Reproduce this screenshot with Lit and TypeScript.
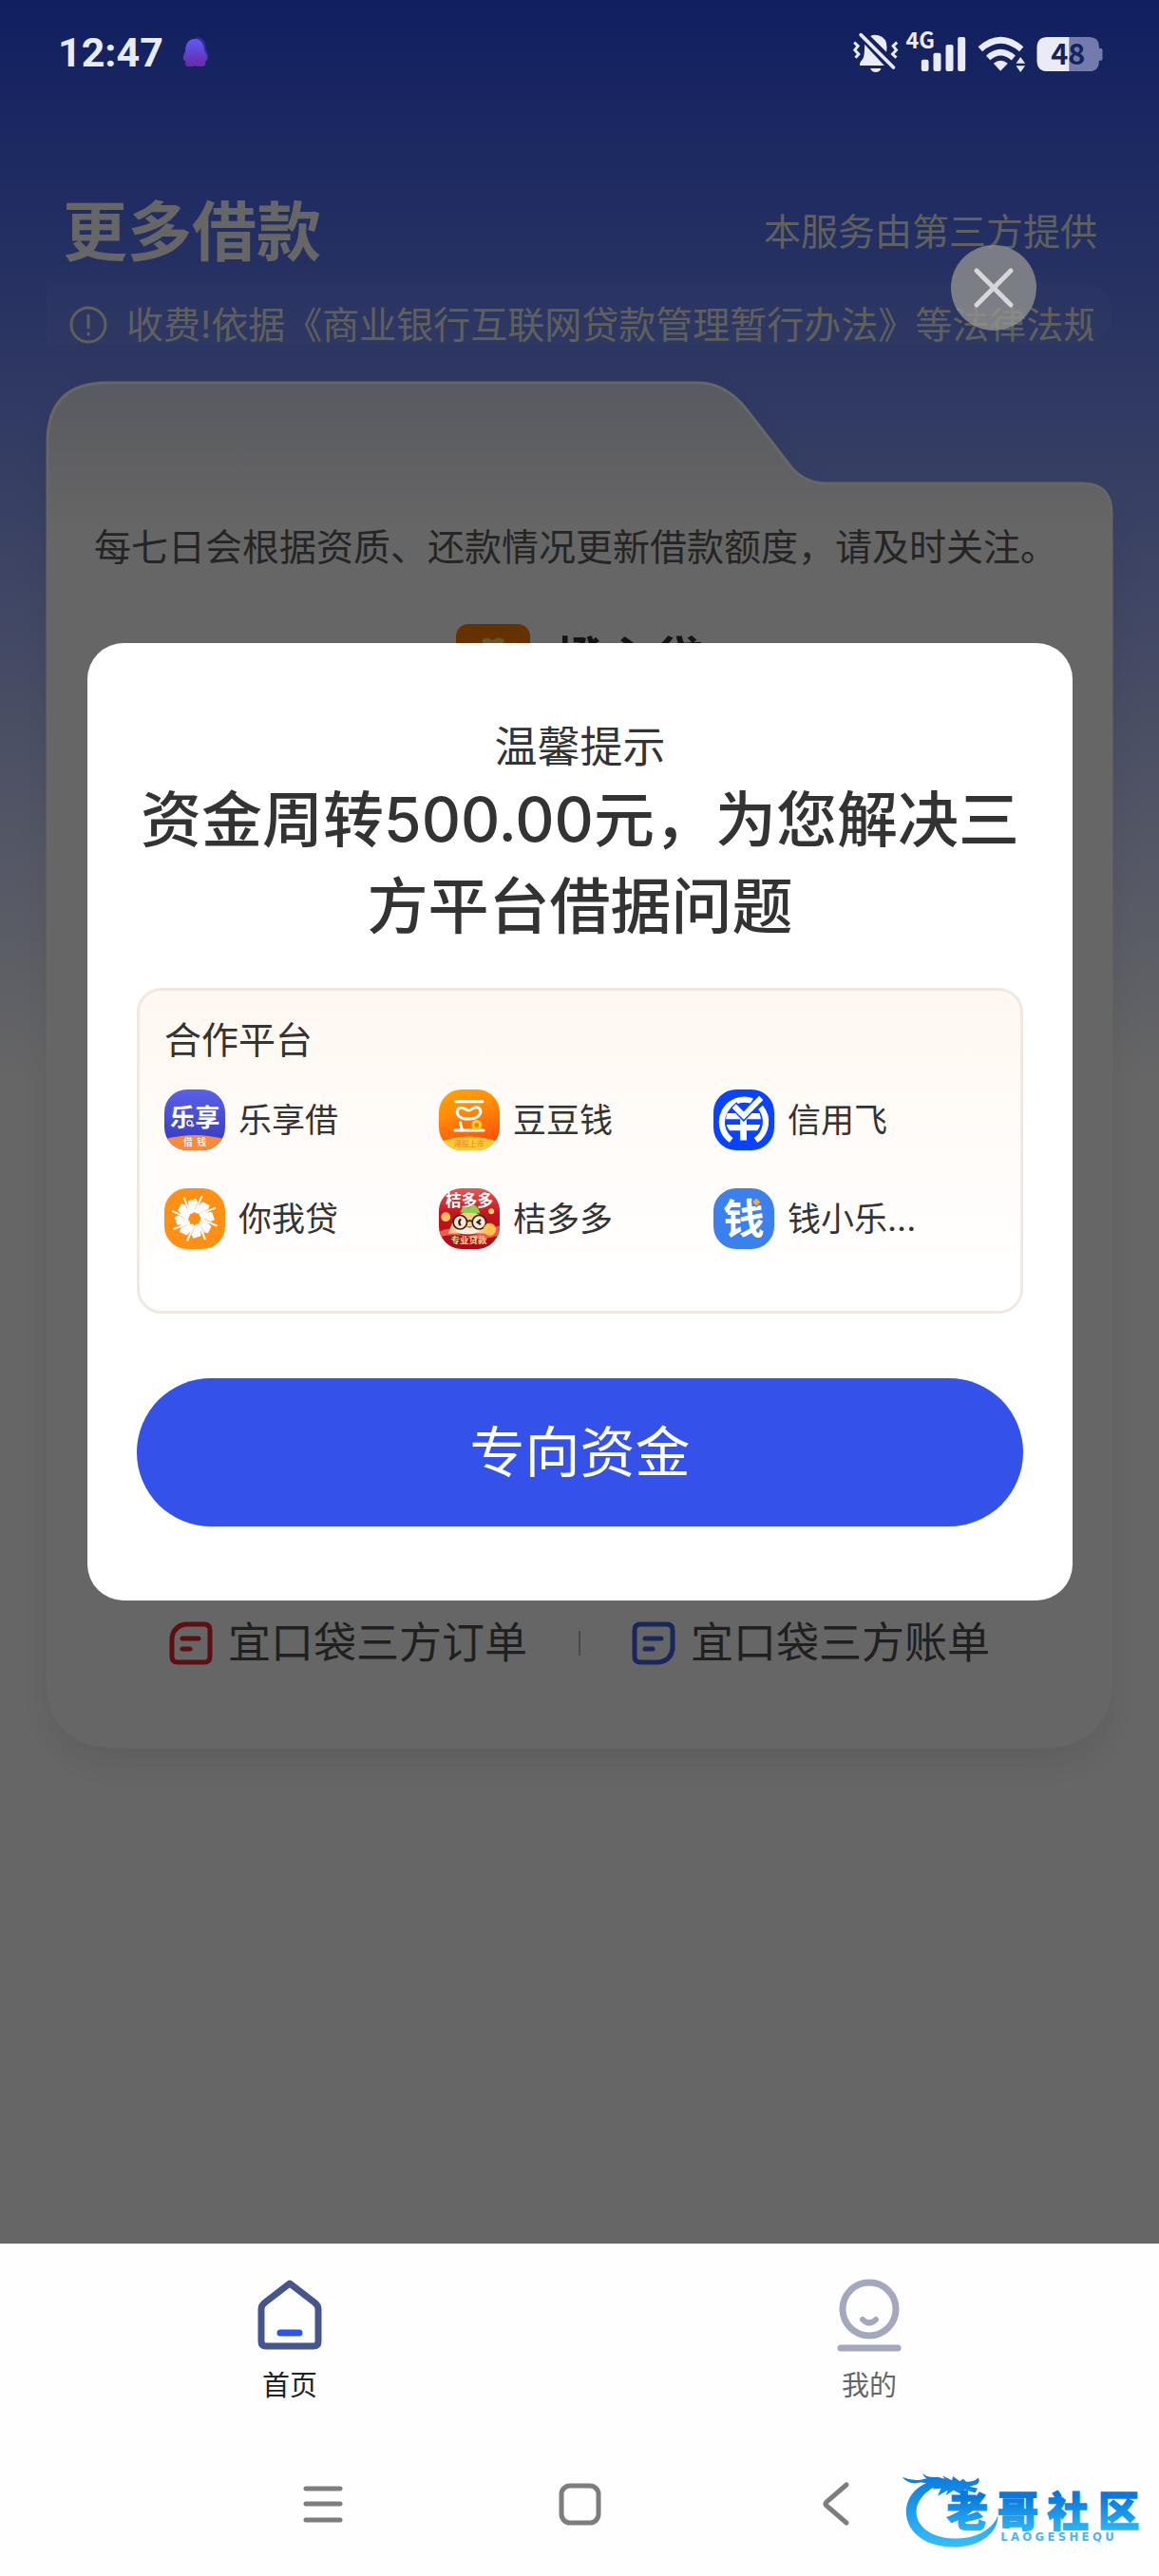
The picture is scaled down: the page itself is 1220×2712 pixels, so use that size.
import { LitElement, html, css, svg } from "lit";
import { customElement } from "lit/decorators.js";

const cjk = css`"Inter", "Noto Sans CJK SC", sans-serif`;

const orderIcon = html`<svg class="link-icon" viewBox="0 0 46 46" fill="none" stroke-linecap="round" aria-hidden="true">
  <path d="M17 3H37Q43 3 43 9V37Q43 43 37 43H9Q3 43 3 37V17Q5 5 17 3Z" stroke="#e8252b" stroke-width="5" />
  <path d="M14 18H31M14 29H22" stroke="#e8252b" stroke-width="5" />
</svg>`;

const billIcon = html`<svg class="link-icon" viewBox="0 0 46 46" fill="none" stroke-linecap="round" aria-hidden="true">
  <path d="M9 3H37Q43 3 43 9V29Q41 41 29 43H9Q3 43 3 37V9Q3 3 9 3Z" stroke="#4262e6" stroke-width="5" />
  <path d="M14 18H31M14 29H22" stroke="#4262e6" stroke-width="5" />
</svg>`;

const logoLexiang = svg`
  <defs><linearGradient id="g" x2="0" y2="1"><stop stop-color="#5b60ea"/><stop offset="1" stop-color="#3238b8"/></linearGradient></defs>
  <rect width="195" height="195" fill="url(#g)"/>
  <text x="18" y="119" font-size="80" font-weight="700" fill="#fff">乐享</text>
  <circle cx="81" cy="108" r="11" fill="#3f46cc"/>
  <circle cx="81" cy="108" r="8" fill="none" stroke="#fff" stroke-width="4"/>
  <path d="M0 160Q97 132 195 160V195H0Z" fill="#fb8a3c"/>
  <text x="61" y="180" font-size="30" font-weight="500" fill="#fff">借</text>
  <text x="104" y="180" font-size="30" font-weight="500" fill="#fff">钱</text>`;

const logoDoudou = svg`
  <defs><linearGradient id="g" x2=".3" y2="1"><stop stop-color="#ffa500"/><stop offset=".45" stop-color="#ff8a08"/><stop offset="1" stop-color="#ff5208"/></linearGradient></defs>
  <rect width="195" height="195" fill="url(#g)"/>
  <g fill="none" stroke="#fff" stroke-width="9" stroke-linecap="round" stroke-linejoin="round">
    <path d="M54 39H140"/>
    <path d="M74 59C58 58 54 74 64 85C76 98 116 98 128 84C140 70 132 56 118 57C106 58 104 67 96 67C88 67 86 60 74 59Z"/>
    <path d="M68 106L74 128M52 131H144"/>
  </g>
  <circle cx="121" cy="114" r="12" fill="#ff7a10" stroke="#ffd21e" stroke-width="9"/>
  <path d="M0 170Q97 132 195 170V195H0Z" fill="#ffc93a"/>
  <text x="49" y="184" font-size="24" font-weight="700" fill="#ec9a2a">港股上市</text>`;

const logoXinyong = svg`
  <defs><clipPath id="c"><circle cx="96" cy="98" r="56"/></clipPath></defs>
  <rect width="195" height="195" fill="#0a43ff"/>
  <g fill="none" stroke="#fff" stroke-width="19">
    <path d="M57 163A72 72 0 0 1 124 37"/>
    <path d="M151 57A72 72 0 0 1 136 163"/>
    <g clip-path="url(#c)"><path d="M30 86H162M30 122H162"/></g>
    <path d="M96 88V163" stroke-width="21"/>
  </g>
  <path d="M64 50L97 84L152 28" fill="none" stroke="#0a43ff" stroke-width="27"/>
  <path d="M66 53L97 84L153 27" fill="none" stroke="#fff" stroke-width="18"/>`;

const logoNiwo = svg`
  <rect width="195" height="195" fill="#ff9016"/>
  <g transform="translate(97 97)" fill="#fff" stroke="#fff">
    ${[0, 45, 90, 135, 180, 225, 270, 315].map(
      (a) => svg`<g transform="rotate(${a})">
        <path d="M-20 -12L-20 -56L4 -64L10 -52L-4 -18Z" stroke="none"/>
        <path d="M3 -26L24 -72" stroke-width="6" fill="none"/>
      </g>`,
    )}
  </g>
  <path d="M97 80l5 9 10-3-3 10 9 5-9 5 3 10-10-3-5 9-5-9-10 3 3-10-9-5 9-5-3-10 10 3Z" fill="#ff9016"/>`;

const logoJuduo = svg`
  <defs><linearGradient id="g" x2="0" y2="1"><stop stop-color="#e5575c"/><stop offset=".4" stop-color="#c4161f"/><stop offset="1" stop-color="#a80d17"/></linearGradient></defs>
  <rect width="195" height="195" fill="url(#g)"/>
  <path d="M0 140Q40 120 60 142T140 140T195 120V150Q150 168 97 156T0 156Z" fill="#ee5a50"/>
  <text x="21" y="59" font-size="51" font-weight="700" fill="#fff">桔多多</text>
  <path d="M30 145Q50 78 97 74Q148 78 166 145Z" fill="#ffc98c"/>
  <path d="M68 78L78 58Q98 70 108 52Q128 58 132 80Z" fill="#8fce4a"/>
  <ellipse cx="92" cy="134" rx="38" ry="14" fill="#fff0da"/>
  <g fill="#ffe8cf" stroke="#33231f" stroke-width="5"><circle cx="68" cy="109" r="22"/><circle cx="129" cy="109" r="22"/><path d="M90 107Q98 101 107 107" fill="none"/></g>
  <path d="M70 98Q60 110 70 119M134 101L124 109L134 116" fill="none" stroke="#33231f" stroke-width="7"/>
  <path d="M86 122Q98 132 110 122" fill="#e9532c"/>
  <circle cx="22" cy="92" r="15" fill="#ffbe62"/><circle cx="163" cy="132" r="20" fill="#ffc24a"/><circle cx="168" cy="74" r="9" fill="#ffd36e"/>
  <text x="38" y="178" font-size="29" font-weight="700" fill="#ffd9a0">专业贷款</text>`;

const logoQian = svg`
  <rect width="195" height="195" fill="#3c80ee"/>
  <text x="31" y="147" font-size="132" font-weight="700" fill="#fff">钱</text>
  <path d="M138 26L155 44L138 62L121 44Z" fill="#3c80ee"/>
  <path d="M138 32L150 44L138 56L126 44Z" fill="#f0b032"/>`;

const platforms = [
  { name: "乐享借", logo: logoLexiang },
  { name: "豆豆钱", logo: logoDoudou },
  { name: "信用飞", logo: logoXinyong },
  { name: "你我贷", logo: logoNiwo },
  { name: "桔多多", logo: logoJuduo },
  { name: "钱小乐...", logo: logoQian },
];

@customElement("platform-item")
class PlatformItem extends LitElement {
  static properties = { item: { attribute: false } };
  declare item: (typeof platforms)[number];

  static styles = css`
    :host {
      display: flex;
      align-items: center;
      gap: 14px;
      font: 400 35px/40px ${cjk};
      color: #333;
      white-space: nowrap;
    }
    .logo {
      flex: none;
      width: 64px;
      height: 64px;
      border-radius: 24px;
      font-family: "Noto Sans CJK SC", sans-serif;
    }
  `;

  render() {
    return html`<svg class="logo" viewBox="0 0 195 195" aria-hidden="true">${this.item.logo}</svg>
      <span>${this.item.name}</span>`;
  }
}

@customElement("status-bar")
class StatusBar extends LitElement {
  static styles = css`
    :host {
      display: flex;
      align-items: center;
      gap: 20px;
      padding: 0 57px 0 61px;
      color: #e9ebf6;
    }
    .time {
      font: 700 43px/48px "Roboto", sans-serif;
    }
    .app {
      width: 28px;
      height: 32px;
    }
    .signals {
      width: 267px;
      height: 47px;
      margin-left: auto;
      font-family: "Noto Sans CJK SC", sans-serif;
      font-weight: 700;
    }
  `;

  render() {
    return html`
      <span class="time">12:47</span>
      <svg class="app" viewBox="0 0 28 32" aria-hidden="true">
        <defs>
          <linearGradient id="p" x2="0" y2="1"><stop stop-color="#5d5cf4" /><stop offset="1" stop-color="#6a28a8" /></linearGradient>
        </defs>
        <path d="M14 0C23 0 25 7 25 13C28 18 28 22 26 25H8Z" fill="#2a2f96" />
        <path d="M13 2C20 2 23 8 23 14C27 20 27 24 24 25C25 28 24 31 21 31H15L13 30L11 31H5C3 30 2 28 4 25C0 26 0 21 3 15C3 8 6 2 13 2Z" fill="url(#p)" />
      </svg>
      <svg class="signals" viewBox="80 60 800 141" overflow="visible" fill="#e9ebf6" role="img" aria-label="静音 4G 48%">
        <path d="M140 78Q150 72 166 76Q192 84 192 112L191 128Z" />
        <path d="M122 104L184 171H107Q104 164 116 150Q122 142 122 104Z" />
        <path d="M140 180H174Q170 192 157 192Q144 192 140 180Z" />
        <path d="M110 74L213 177" fill="none" stroke="#e9ebf6" stroke-width="11" stroke-linecap="round" />
        <path d="M89 98L101 109L91 122L103 135L93 146M224 98L212 109L222 122L210 135L222 146" fill="none" stroke="#e9ebf6" stroke-width="9" />
        <text x="252" y="117" font-size="70">4G</text>
        <rect x="301" y="152" width="23" height="37" rx="6" />
        <rect x="339" y="131" width="24" height="58" rx="6" />
        <rect x="378" y="105" width="24" height="84" rx="6" />
        <rect x="416" y="81" width="24" height="108" rx="6" />
        <path d="M487 119Q551 62 617 119" fill="none" stroke="#e9ebf6" stroke-width="20" />
        <path d="M512 147Q551 112 592 147" fill="none" stroke="#e9ebf6" stroke-width="19" />
        <path d="M529 164Q551 147 574 164L551 188Z" />
        <path d="M614 144L629 164H600ZM614 192L629 172H600Z" />
        <path d="M768 81H830Q862 81 862 112V158Q862 189 830 189H768Z" fill="#727bab" />
        <rect x="858" y="116" width="15" height="40" rx="7" fill="#727bab" />
        <path d="M768 81H700Q666 81 666 115V155Q666 189 700 189H768Z" />
        <text x="710" y="168" font-size="92" fill="#142260">48</text>
      </svg>
    `;
  }
}

@customElement("tip-dialog")
class TipDialog extends LitElement {
  static styles = css`
    :host {
      display: block;
      position: relative;
      padding: 80px 52px 78px;
      border-radius: 38px;
      background: #fff;
      color: #333;
      font-family: ${cjk};
    }
    .eyebrow {
      margin: 0;
      font-size: 45px;
      font-weight: 400;
      line-height: 60px;
      text-align: center;
    }
    .headline {
      margin: 0;
      font-size: 64px;
      font-weight: 500;
      line-height: 91px;
      text-align: center;
    }
    .panel {
      margin-top: 41px;
      padding: 32px 34px 65px 26px;
      border: 3px solid #f1e8e1;
      border-radius: 26px;
      background: linear-gradient(#fff8f1, #ffffff 90%);
    }
    .panel-title {
      margin: 0;
      font-size: 39px;
      font-weight: 400;
      line-height: 40px;
    }
    .grid {
      display: grid;
      grid-template-columns: repeat(3, 1fr);
      row-gap: 40px;
      margin: 32px 0 0;
      padding: 0;
      list-style: none;
    }
    .action {
      display: block;
      width: 100%;
      height: 156px;
      margin-top: 68px;
      border: 0;
      border-radius: 78px;
      background: #3452ea;
      color: #fff;
      font: 400 58px/80px ${cjk};
    }
    .close {
      position: absolute;
      top: -419px;
      right: 38px;
      width: 90px;
      height: 90px;
      padding: 0;
      border: 0;
      border-radius: 50%;
      background: rgba(150, 150, 145, 0.76);
    }
    .close svg {
      display: block;
    }
  `;

  render() {
    return html`
      <button class="close" type="button" aria-label="关闭">
        <svg width="90" height="90" viewBox="0 0 90 90" fill="none" stroke="#d6d7da" stroke-width="5" stroke-linecap="round">
          <path d="M27 27L63 63M63 27L27 63" />
        </svg>
      </button>
      <p class="eyebrow">温馨提示</p>
      <h2 class="headline">资金周转500.00元，为您解决三方平台借据问题</h2>
      <section class="panel">
        <h3 class="panel-title">合作平台</h3>
        <ul class="grid">
          ${platforms.map((p) => html`<li><platform-item .item=${p}></platform-item></li>`)}
        </ul>
      </section>
      <button class="action" type="button">专向资金</button>
    `;
  }
}

@customElement("bottom-nav")
class BottomNav extends LitElement {
  static styles = css`
    :host {
      display: block;
      position: relative;
      padding-top: 34px;
      background: #fefefe;
      font-family: ${cjk};
    }
    .tabs {
      display: grid;
      grid-template-columns: 1fr 1fr;
    }
    .tab {
      display: flex;
      flex-direction: column;
      align-items: center;
      gap: 16px;
      color: #666;
      font-size: 29px;
      line-height: 40px;
      text-decoration: none;
    }
    .tab.active {
      color: #222;
    }
    .system {
      display: flex;
      justify-content: center;
      gap: 210px;
      padding: 74px 0 46px;
    }
    .key {
      padding: 0;
      border: 0;
      background: none;
      width: 60px;
      height: 60px;
    }
    .watermark {
      position: absolute;
      right: 16px;
      bottom: 28px;
      width: 257px;
      height: 87px;
    }
  `;

  render() {
    return html`
      <nav class="tabs">
        <a class="tab active" href="#home">
          <svg width="80" height="80" viewBox="0 0 80 80" fill="none" stroke-linejoin="round" stroke-linecap="round" aria-hidden="true">
            <path d="M40 8L66 28Q70 31 70 35V69Q70 74 65 74H15Q10 74 10 69V35Q10 31 14 28Z" stroke="#46568c" stroke-width="7" />
            <path d="M30 60H50" stroke="#2b55ea" stroke-width="7" />
          </svg>
          <span>首页</span>
        </a>
        <a class="tab" href="#mine">
          <svg width="80" height="80" viewBox="0 0 80 80" fill="none" stroke="#a3a8bf" stroke-linecap="round" aria-hidden="true">
            <circle cx="40" cy="35" r="28" stroke-width="7" />
            <path d="M33 46Q40 53 47 46" stroke-width="6" />
            <path d="M10 76H70" stroke-width="7" />
          </svg>
          <span>我的</span>
        </a>
      </nav>
      <div class="system">
        <button class="key" type="button" aria-label="最近任务">
          <svg width="60" height="60" viewBox="0 0 60 60" fill="none" stroke="#7d7d7d" stroke-width="5" stroke-linecap="round">
            <path d="M12 14H48M12 30H48M12 47H48" />
          </svg>
        </button>
        <button class="key" type="button" aria-label="主屏幕">
          <svg width="60" height="60" viewBox="0 0 60 60" fill="none" stroke="#7d7d7d" stroke-width="5">
            <rect x="11" y="11" width="39" height="39" rx="9" />
          </svg>
        </button>
        <button class="key" type="button" aria-label="返回">
          <svg width="60" height="60" viewBox="0 0 60 60" fill="none" stroke="#7d7d7d" stroke-width="5" stroke-linecap="round">
            <path d="M41 10L20 28Q18 30 20 32L41 50" />
          </svg>
        </button>
      </div>
      <svg class="watermark" viewBox="80 50 770 260" font-family="'Noto Sans CJK SC', sans-serif">
        <defs>
          <linearGradient id="w" gradientUnits="userSpaceOnUse" x1="0" y1="80" x2="0" y2="300">
            <stop stop-color="#0b7be0" />
            <stop offset="1" stop-color="#37bdf7" />
          </linearGradient>
          <linearGradient id="t" gradientUnits="userSpaceOnUse" x1="0" y1="145" x2="0" y2="245">
            <stop stop-color="#0878dc" />
            <stop offset="1" stop-color="#2ab2f4" />
          </linearGradient>
        </defs>
        <g fill="url(#w)">
          <path d="M180 95C60 130 70 300 250 303C340 303 390 255 390 205C370 250 320 278 250 276C120 270 90 160 200 108Z" />
          <path d="M88 82Q120 96 150 90Q170 84 185 92L205 100L190 110Q160 94 130 102Q104 102 88 82Z" />
          <path d="M152 70Q165 85 200 82L222 88L215 78L245 92L248 80L270 95L280 88L290 97Q315 98 328 84Q336 98 322 106L300 112L326 118L318 132L285 122L270 134L250 124L225 140L232 124L200 142L210 118L185 120L190 100Q160 92 152 70Z" />
        </g>
        <g fill="url(#t)" stroke="url(#t)" stroke-width="4" font-size="130" font-weight="900">
          <text x="228" y="237">老</text>
          <text x="388" y="237">哥</text>
          <text x="546" y="237">社</text>
          <text x="706" y="237">区</text>
        </g>
        <text x="398" y="282" font-family="'DejaVu Sans', sans-serif" font-size="35" font-weight="700" letter-spacing="10" fill="#4fb4f2">LAOGESHEQU</text>
      </svg>
    `;
  }
}

@customElement("app-root")
class AppRoot extends LitElement {
  static styles = css`
    :host {
      display: flex;
      flex-direction: column;
      min-height: 100vh;
      font-family: ${cjk};
    }
    .stage {
      flex: 1;
      position: relative;
      background: linear-gradient(#2a4ef2, #fff 1136px) #fff;
    }
    .status {
      position: relative;
      z-index: 2;
      height: 110px;
    }
    .header {
      display: flex;
      align-items: center;
      justify-content: space-between;
      height: 187px;
      padding: 80px 65px 0 66px;
      box-sizing: border-box;
      color: #fff;
    }
    .title {
      margin: 0;
      font-size: 68px;
      font-weight: 700;
      line-height: 80px;
    }
    .provider {
      font-size: 39px;
      line-height: 40px;
      color: #f0f0e8;
    }
    .notice {
      display: flex;
      align-items: center;
      gap: 20px;
      height: 66px;
      margin: 0 49px;
      padding: 24px 20px 0 24px;
      box-sizing: border-box;
      border-radius: 0 33px 33px 0;
      background: rgba(255, 255, 255, 0.05);
      color: #eeeee6;
      font-size: 39px;
      line-height: 42px;
    }
    .notice svg {
      flex: none;
    }
    .notice span {
      overflow: hidden;
      white-space: nowrap;
    }
    .card {
      position: relative;
      display: flex;
      flex-direction: column;
      align-items: center;
      margin: 39px 49px 0;
      padding: 154px 50px 84px;
    }
    .shape {
      position: absolute;
      inset: 0;
      width: 100%;
      height: 100%;
      overflow: visible;
      filter: drop-shadow(0 18px 16px rgba(0, 0, 0, 0.07));
    }
    .tip,
    .brand,
    .links {
      position: relative;
      margin: 0;
    }
    .tip {
      align-self: flex-start;
      font-size: 39px;
      line-height: 40px;
      color: #5c5c5c;
      white-space: nowrap;
    }
    .brand {
      display: flex;
      align-items: center;
      gap: 26px;
      margin-top: 61px;
      color: #333;
      font-size: 52px;
      font-weight: 700;
      line-height: 78px;
    }
    .links {
      display: flex;
      align-items: center;
      gap: 54px;
      margin-top: 969px;
    }
    .links a {
      display: flex;
      align-items: center;
      gap: 16px;
      color: #505050;
      font-size: 45px;
      line-height: 52px;
      text-decoration: none;
      white-space: nowrap;
    }
    .link-icon {
      width: 46px;
      height: 46px;
    }
    .divider {
      width: 2px;
      height: 26px;
      background: #bbb;
    }
    .overlay {
      position: absolute;
      inset: 0;
      display: flex;
      flex-direction: column;
      justify-content: center;
      padding: 0 91px 0 92px;
      background: rgba(0, 0, 0, 0.6);
    }
  `;

  render() {
    return html`
      <main class="stage">
        <status-bar class="status"></status-bar>
        <header class="header">
          <h1 class="title">更多借款</h1>
          <span class="provider">本服务由第三方提供</span>
        </header>
        <div class="notice">
          <svg width="40" height="40" viewBox="0 0 40 40" fill="none" stroke="#eeeee6" stroke-width="3" stroke-linecap="round" aria-hidden="true">
            <circle cx="20" cy="20" r="18" />
            <path d="M20 10V23M20 29V30" />
          </svg>
          <span>收费!依据《商业银行互联网贷款管理暂行办法》等法律法规</span>
        </div>
        <section class="card">
          <svg class="shape" viewBox="0 0 1122 1438" preserveAspectRatio="none" aria-hidden="true">
            <defs>
              <linearGradient id="card" x2="0" y2="1">
                <stop stop-color="#dce1f6" />
                <stop offset=".06" stop-color="#f0f1f6" />
                <stop offset=".11" stop-color="#ffffff" />
              </linearGradient>
            </defs>
            <path
              d="M64 1H686Q714 1 736 28L784 90Q798 107 822 107H1090Q1121 107 1121 138V1362Q1121 1437 1046 1437H76Q1 1437 1 1362V64Q1 1 64 1Z"
              fill="url(#card)" stroke="#ffffff" stroke-width="3" />
          </svg>
          <p class="tip">每七日会根据资质、还款情况更新借款额度，请及时关注。</p>
          <div class="brand">
            <svg width="78" height="78" viewBox="0 0 78 78" aria-hidden="true">
              <rect width="78" height="78" rx="13" fill="#ff7c00" />
              <path d="M27 17Q32 12 38 17Q46 12 51 17Q48 24 46 28Q58 40 52 56Q39 66 26 56Q20 40 32 28Z" fill="#ffdc73" />
            </svg>
            <span>橙心贷</span>
          </div>
          <nav class="links">
            <a href="#orders">${orderIcon}<span>宜口袋三方订单</span></a>
            <i class="divider"></i>
            <a href="#bills">${billIcon}<span>宜口袋三方账单</span></a>
          </nav>
        </section>
        <div class="overlay">
          <tip-dialog role="dialog" aria-label="温馨提示"></tip-dialog>
        </div>
      </main>
      <bottom-nav></bottom-nav>
    `;
  }
}
